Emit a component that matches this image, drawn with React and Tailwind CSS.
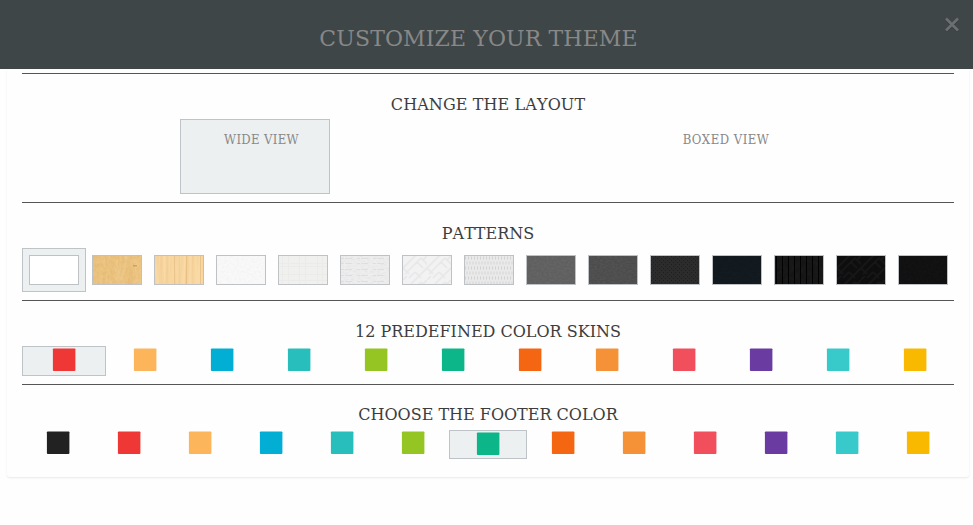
const SKINS = [
  "#ef3735", "#fcb55a", "#02aed4", "#27bebc", "#95c523", "#0db688",
  "#f46612", "#f59237", "#f24f5c", "#6a3ca1", "#38cacb", "#f8b900",
];
const FOOTERS = ["#222222", ...SKINS];

// Woven diagonal maze shared by the light and dark weave swatches.
function Weave({ id, bg, line }) {
  return (
    <>
      <pattern id={id} width="24" height="24" patternUnits="userSpaceOnUse">
        <rect width="24" height="24" fill={bg} />
        <g stroke={line} strokeWidth="1.7" fill="none">
          <path d="M-2 14 L14 -2 M2 18 L18 2 M10 26 L26 10 M6 22 L12 16 M14 6 L20 12 M18 2 L26 10 M-2 10 L6 18 M12 16 L18 22 M0 24 L4 20 M20 4 L24 0" />
        </g>
      </pattern>
      <rect width="48" height="28" fill={`url(#${id})`} />
    </>
  );
}

// Fine grain laid over a swatch; v is the grain colour in the 0-1 range.
function Grain({ id, freq, v, alpha, seed = 1 }) {
  return (
    <>
      <filter id={id} x="0" y="0" width="100%" height="100%" colorInterpolationFilters="sRGB">
        <feTurbulence type="fractalNoise" baseFrequency={freq} numOctaves="3" seed={seed} />
        <feColorMatrix values={`0 0 0 0 ${v[0]} 0 0 0 0 ${v[1]} 0 0 0 0 ${v[2]} ${alpha} 0 0 0 ${-alpha * 0.35}`} />
      </filter>
      <rect width="48" height="28" filter={`url(#${id})`} />
    </>
  );
}

const Fill = ({ c }) => <rect width="48" height="28" fill={c} />;

const PATTERNS = [
  <Fill c="#ffffff" />,
  <>
    <Fill c="#edc98a" />
    <Grain id="g1" freq="0.16 0.02" v={[0.88, 0.68, 0.37]} alpha={0.9} />
    <Grain id="g1b" freq="0.4 0.25" v={[0.87, 0.63, 0.32]} alpha={0.6} seed={5} />
    <rect x="40" y="9" width="4" height="1.5" fill="#c98f40" opacity="0.7" />
  </>,
  <>
    <Fill c="#f9d9a5" />
    <Grain id="g2" freq="0.35 0.015" v={[0.9, 0.71, 0.43]} alpha={0.8} seed={3} />
    <path d="M19.5 0v28M31.5 0v28M45.5 0v28" stroke="#dfb475" opacity="0.5" />
  </>,
  <>
    <Fill c="#f9f9f9" />
    <Grain id="g3" freq="0.4" v={[0.92, 0.92, 0.92]} alpha={0.8} />
  </>,
  <>
    <Fill c="#f0f0ee" />
    <path d="M3.5 0v28M9.5 0v28M20.5 0v28M26.5 0v28M38.5 0v28M43.5 0v28M0 7.5h48M0 10.5h48M0 18.5h48M0 24.5h48" stroke="#ebebe8" opacity="0.8" />
  </>,
  <>
    <Fill c="#eeeeee" />
    <Grain id="g5" freq="0.3 0.6" v={[0.82, 0.82, 0.82]} alpha={0.6} />
    <path d="M0 2.5h48M0 7.5h48M0 13.5h48M0 19.5h48M0 25.5h48" stroke="#dcdcdc" strokeDasharray="3 1 7 5" opacity="0.8" />
  </>,
  <Weave id="w1" bg="#f2f2f2" line="#e8e8e8" />,
  <>
    <Fill c="#e9e9e9" />
    <path d="M0 2h48M0 12h48M0 22h48" stroke="#d2d2d2" strokeWidth="3" strokeDasharray="1 2" />
    <path d="M1.5 7h48M1.5 17h48M1.5 27h48" stroke="#d6d6d6" strokeWidth="3" strokeDasharray="1 2" />
  </>,
  <>
    <Fill c="#5f5f5f" />
    <Grain id="g8" freq="0.4 0.5" v={[0.45, 0.45, 0.45]} alpha={0.8} />
  </>,
  <>
    <Fill c="#4c4c4c" />
    <Grain id="g9" freq="0.35 0.7" v={[0.39, 0.39, 0.39]} alpha={0.8} seed={4} />
  </>,
  <>
    <pattern id="dots" width="4" height="4" patternUnits="userSpaceOnUse">
      <rect width="4" height="4" fill="#2c2c2c" />
      <path d="M0 .5h1M2 2.5h1" stroke="#1e1e1e" />
    </pattern>
    <rect width="48" height="28" fill="url(#dots)" />
  </>,
  <>
    <Fill c="#12191e" />
    <Grain id="g11" freq="0.2 0.5" v={[0.1, 0.13, 0.15]} alpha={0.7} />
  </>,
  <>
    <Fill c="#151515" />
    <Grain id="g12" freq="0.2" v={[0.13, 0.13, 0.13]} alpha={1} />
    <path d="M1.5 0v28M7.5 0v28M13.5 0v28M19.5 0v28M25.5 0v28M31.5 0v28M37.5 0v28M43.5 0v28" stroke="#020202" />
  </>,
  <Weave id="w2" bg="#0e0e0e" line="#171717" />,
  <>
    <Fill c="#101010" />
    <Grain id="g14" freq="0.4" v={[0.1, 0.1, 0.1]} alpha={0.8} />
  </>,
];

function Section({ title, className, titleClass = "pt-[19px] pb-[2px]", children }) {
  return (
    <section className={`border-t border-[#555555] ${className}`}>
      <h2 className={`text-center text-[16px] leading-[24px] text-[#3d3d3d] ${titleClass}`}>{title}</h2>
      {children}
    </section>
  );
}

function Swatches({ colors, selected, className, selectedClass, cellClass }) {
  return (
    <div className={`flex ${className}`}>
      {colors.map((color, i) => (
        <button
          key={color}
          className={
            i === selected
              ? `flex shrink-0 justify-center border border-[#bdc3c7] bg-[#ecf0f1] pt-px ${selectedClass}`
              : `flex flex-1 justify-center ${cellClass}`
          }
        >
          <svg width="24" height="24" className="block">
            <rect x="0.9" y="0.4" width="22.5" height="22.5" rx="0.9" fill={color} />
          </svg>
        </button>
      ))}
    </div>
  );
}

export default function App() {
  return (
    <div className="h-[525px] w-[973px] overflow-hidden bg-[#fefefe] font-['DejaVu_Serif',serif] [font-kerning:none]">
      <header className="flex h-[69px] bg-[#3f4647]">
        <h1 className="flex-1 pt-[23px] pl-[13px] text-center text-[22px] leading-[32px] tracking-[0.12px] text-[#888888]">
          CUSTOMIZE YOUR THEME
        </h1>
        <button aria-label="Close" className="mt-[17px] mr-[13px] h-[16px] w-[16px]">
          <svg width="16" height="16" viewBox="0 0 16 16" fill="none" strokeWidth="2.6">
            <path d="M2 2.5L14 14.5M14 2.5L2 14.5" stroke="#383e3f" />
            <path d="M2 1.5L14 13.5M14 1.5L2 13.5" stroke="#6b6f70" />
          </svg>
        </button>
      </header>
      <main className="mr-[4px] ml-[7px] h-[408px] rounded-b-[3px] pt-[4px] pr-[15px] pl-[15px] shadow-[0_1px_2px_rgba(0,0,0,0.09)]">
        <Section title="CHANGE THE LAYOUT" className="h-[129px]" titleClass="pt-[19px] pb-[2px] tracking-[0.1px]">
          <div className="flex font-['DejaVu_Serif_Condensed','DejaVu_Serif',serif] text-[13px] leading-[20px] text-[#888888]">
            <div className="flex w-[466px] justify-center">
              <div className="h-[75px] w-[150px] border border-[#bdc3c7] bg-[#ecf0f1] pt-[10px] pl-[13px] text-center tracking-[0.34px]">
                WIDE VIEW
              </div>
            </div>
            <div className="w-[466px] pt-[11px] pl-[10px] text-center tracking-[0.48px]">BOXED VIEW</div>
          </div>
        </Section>
        <Section title="PATTERNS" className="h-[98px]">
          <div className="flex items-center gap-[12px]">
            {PATTERNS.map((art, i) => (
              <button
                key={i}
                className={i === 0 ? "mr-[-6px] border border-[#bdc3c7] bg-[#ecf0f1] p-[6px]" : ""}
              >
                <span className="block h-[30px] w-[50px] border border-[#bfc2c4]">
                  <svg width="48" height="28" className="block">{art}</svg>
                </span>
              </button>
            ))}
          </div>
        </Section>
        <Section title="12 PREDEFINED COLOR SKINS" className="h-[84px]">
          <Swatches colors={SKINS} selected={0} className="h-[30px]" selectedClass="w-[84px]" cellClass="pt-[2px]" />
        </Section>
        <Section title="CHOOSE THE FOOTER COLOR" className="" titleClass="pt-[18px] pb-[3px]">
          <Swatches colors={FOOTERS} selected={6} className="h-[29px]" selectedClass="w-[78px]" cellClass="pt-px" />
        </Section>
      </main>
    </div>
  );
}
